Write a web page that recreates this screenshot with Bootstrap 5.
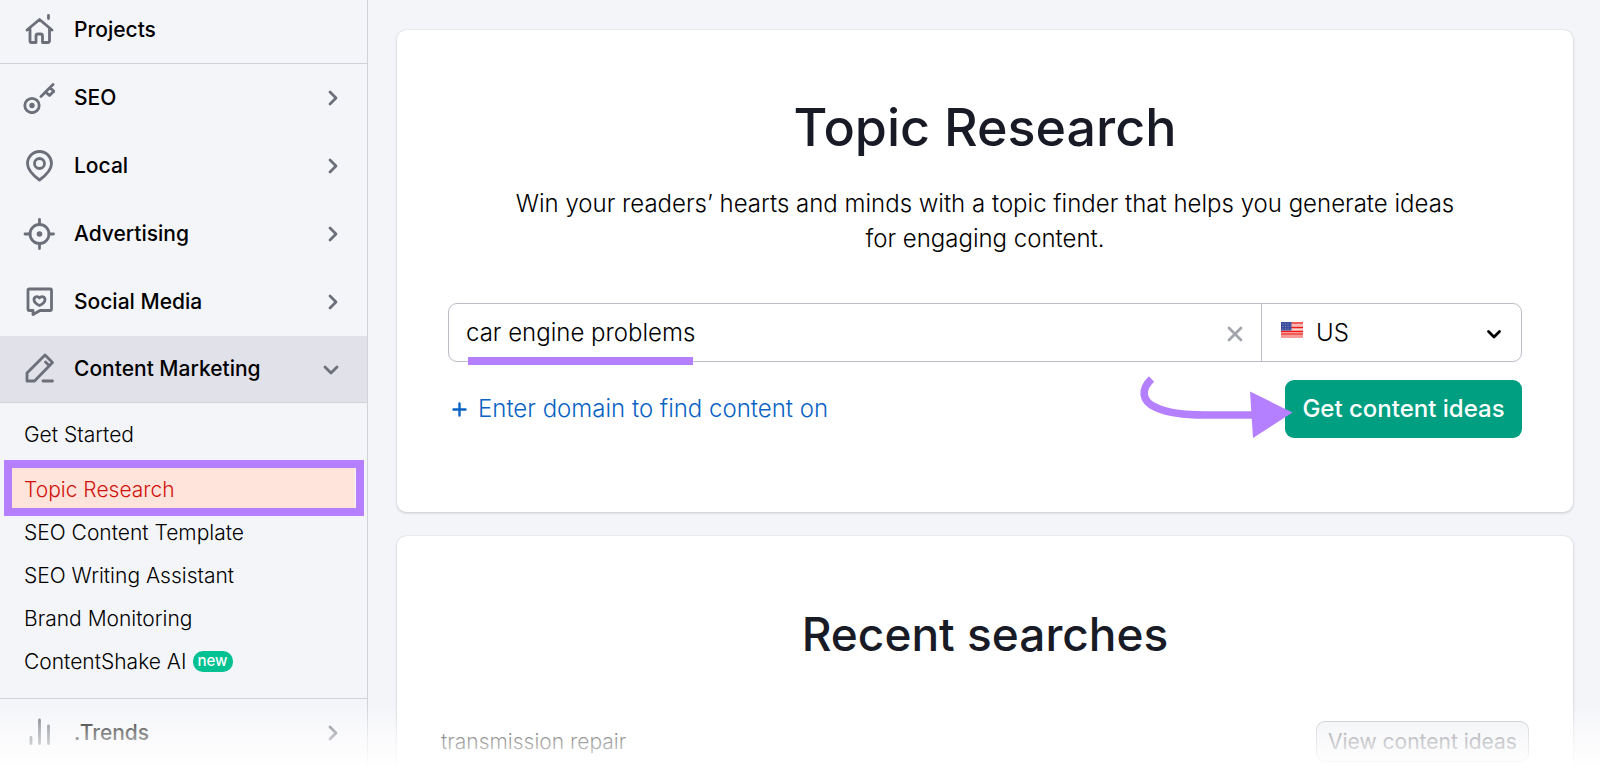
<!DOCTYPE html>
<html lang="en">
<head>
<meta charset="utf-8">
<meta name="viewport" content="width=device-width, initial-scale=1">
<title>Topic Research</title>
<link href="https://cdn.jsdelivr.net/npm/bootstrap@5.3.0/dist/css/bootstrap.min.css" rel="stylesheet">
<style>
  :root { --accent: #b580ff; --line: #d1d2d9; --ink: #181b26; --surface: #f4f5f9; }
  body { font-family: Inter, "Liberation Sans", sans-serif; background: var(--surface); color: #000; }
  .side { width: 368px; border-right: 1px solid var(--line); }
  .side-link { height: 68px; padding: 0 28px 0 23px; gap: 19px; font-size: 21px; font-weight: 500; color: #000; text-decoration: none; }
  .side-link svg { color: #6c6e79; flex: none; }
  .side-link.home { height: 64px; padding-bottom: 4px; border-bottom: 1px solid var(--line); }
  .side-link.open { height: 67px; background: #e0e1e9; border-bottom: 1px solid var(--line); }
  .stroke { fill: none; stroke: currentColor; stroke-width: 2.8; stroke-linecap: round; stroke-linejoin: round; }
  .subnav { padding: 10px 0 15px; border-bottom: 1px solid var(--line); }
  .subnav a { height: 43px; padding: 0 24px; gap: 6px; font-size: 21px; font-weight: 300; color: #000; text-decoration: none; }
  .subnav .current { margin-top: 12px; padding: 0 12px; background: #ffe4db; background-clip: content-box; color: #d1120c; }
  .subnav .current .label { padding-left: 12px; }
  .ring { inset: -8px 3px -5px 4px; border: 8px solid var(--accent); }
  .tag-new { height: 21px; padding: 0 5px; border-radius: 10px; background: #00c192; color: #fff; font-size: 15px; line-height: 19px; font-weight: 500; }
  .main { padding: 30px 27px 0 29px; gap: 24px; }
  .panel { background: #fff; border-radius: 9px; box-shadow: 0 0 1px rgba(25,27,35,.2), 0 1px 3px rgba(25,27,35,.18); }
  .finder { padding: 64px 51px 74px; }
  .finder h1 { font-size: 52px; line-height: 68px; font-weight: 500; color: var(--ink); margin: 0; }
  .lede { font-size: 24px; line-height: 35px; font-weight: 300; margin: 24px auto 0; max-width: 960px; }
  .query { margin-top: 47px; height: 59px; border: 1px solid #bdbec9; border-radius: 9px; }
  .query input { border: 0; background: none; padding: 0 17px; font-size: 24px; font-weight: 300; outline: 0; }
  .clear { border: 0; background: none; color: #a3a5ae; padding: 0 18px; }
  .country { width: 260px; border-left: 1px solid #bdbec9; }
  .country select { appearance: none; border: 0; background: none; padding: 0 54px; font-size: 24px; line-height: 30px; font-weight: 300; color: #000; outline: 0; }
  .flag { left: 19px; top: 18px; }
  .caret { right: 19px; top: 23px; }
  .mark-line { left: 19px; bottom: -4px; width: 225px; height: 8px; background: var(--accent); }
  .actions { margin-top: 18px; }
  .add { color: #0a63c4; font-size: 24px; font-weight: 300; line-height: 58px; gap: 11px; padding-left: 4px; text-decoration: none; }
  .go, .go:hover { height: 58px; width: 237px; padding: 0; border: 0; border-radius: 9px; background: #009f81; color: #fff; font-size: 24px; font-weight: 500; }
  .arrow { left: -149px; top: -4px; pointer-events: none; }
  .recent { padding: 64px 44px 40px; }
  .recent h2 { font-size: 46px; line-height: 68px; font-weight: 500; color: var(--ink); margin: 0 0 53px; }
  .recent-row { font-size: 21px; font-weight: 300; }
  .view { height: 41px; width: 213px; padding: 0; border: 1px solid #bdbec9; border-radius: 9px; background: #f0f1f4; color: #6c6e79; font-size: 21px; font-weight: 400; }
  .fade-out { height: 66px; background: linear-gradient(rgba(255,255,255,0), rgba(255,255,255,.5) 40%, rgba(255,255,255,.8) 75%, #fff 96%); pointer-events: none; }
</style>
</head>
<body>
<div class="d-flex vh-100 overflow-hidden position-relative">
  <nav class="side flex-shrink-0" aria-label="Tools">
    <a class="side-link home d-flex align-items-center" href="#">
      <svg width="32" height="32" viewBox="0 0 32 32"><path class="stroke" d="M4 16 16.500 5.500 29 16M7 14.500V27a1.500 1.500 0 0 0 1.500 1.500h4.500V22a2 2 0 0 1 2-2h2.500a2 2 0 0 1 2 2v6.500H25a1.500 1.500 0 0 0 1.500-1.500V14.500M25.500 1.500v3"/></svg>
      <span>Projects</span>
    </a>
    <a class="side-link d-flex align-items-center" href="#">
      <svg width="32" height="32" viewBox="0 0 32 32"><g class="stroke"><circle cx="9" cy="23.500" r="7.200"/><path d="M18 14.500 30 2.500M27 5.500l4 4M22.500 10l4 3.500 4-4"/></g><circle cx="9" cy="23.500" r="2.700" fill="currentColor"/></svg>
      <span class="flex-grow-1">SEO</span>
      <svg width="12" height="16" viewBox="0 0 12 16"><path class="stroke" d="m3 2 6 6-6 6"/></svg>
    </a>
    <a class="side-link d-flex align-items-center" href="#">
      <svg width="32" height="32" viewBox="0 0 32 32"><path class="stroke" d="M16.500 30C9 24.500 4.500 19.500 4.500 13.500a12 12 0 0 1 24 0c0 6-4.500 11-12 16.500Z"/><circle class="stroke" cx="16.500" cy="13.500" r="5"/></svg>
      <span class="flex-grow-1">Local</span>
      <svg width="12" height="16" viewBox="0 0 12 16"><path class="stroke" d="m3 2 6 6-6 6"/></svg>
    </a>
    <a class="side-link d-flex align-items-center" href="#">
      <svg width="32" height="32" viewBox="0 0 32 32"><g class="stroke"><circle cx="16.500" cy="16" r="9.500"/><path d="M16.500 1.500v5M16.500 25.500v5M2 16h5M26 16h4.500"/></g><circle cx="16.500" cy="16" r="2.800" fill="currentColor"/></svg>
      <span class="flex-grow-1">Advertising</span>
      <svg width="12" height="16" viewBox="0 0 12 16"><path class="stroke" d="m3 2 6 6-6 6"/></svg>
    </a>
    <a class="side-link d-flex align-items-center" href="#">
      <svg width="32" height="32" viewBox="0 0 32 32"><g class="stroke"><path d="M6 3h21.500a1 1 0 0 1 1 1v19.500a1 1 0 0 1-1 1H17l-7 4v-4H6a1 1 0 0 1-1-1V4a1 1 0 0 1 1-1Z"/><path d="M16.500 19.500c-3.500-1.500-5.500-3.500-5.500-6s3.500-4 5.500-1.500c2-2.500 5.500-1 5.500 1.500s-2 4.500-5.500 6Z"/></g></svg>
      <span class="flex-grow-1">Social Media</span>
      <svg width="12" height="16" viewBox="0 0 12 16"><path class="stroke" d="m3 2 6 6-6 6"/></svg>
    </a>
    <a class="side-link open d-flex align-items-center" href="#" aria-expanded="true">
      <svg width="32" height="32" viewBox="0 0 32 32"><path class="stroke" d="M4 28v-8L22 2l7.500 7.500L11.500 28H4ZM22.500 9l3.500 3.500M20 28h9.500"/></svg>
      <span class="flex-grow-1">Content Marketing</span>
      <svg width="16" height="12" viewBox="0 0 16 12"><path class="stroke" d="m2 4 6 6 6-6"/></svg>
    </a>
    <div class="subnav d-flex flex-column">
      <a class="d-flex align-items-center" href="#">Get Started</a>
      <a class="current d-flex align-items-center position-relative" href="#" aria-current="page"><span class="label">Topic Research</span><span class="ring position-absolute"></span></a>
      <a class="d-flex align-items-center" href="#">SEO Content Template</a>
      <a class="d-flex align-items-center" href="#">SEO Writing Assistant</a>
      <a class="d-flex align-items-center" href="#">Brand Monitoring</a>
      <a class="d-flex align-items-center" href="#">ContentShake AI <span class="tag-new">new</span></a>
    </div>
    <a class="side-link d-flex align-items-center" href="#">
      <svg width="32" height="32" viewBox="0 0 32 32"><path class="stroke" d="M8 20.500v6M16.500 3v23.500M25.500 9v17.500"/></svg>
      <span class="flex-grow-1">.Trends</span>
      <svg width="12" height="16" viewBox="0 0 12 16"><path class="stroke" d="m3 2 6 6-6 6"/></svg>
    </a>
  </nav>

  <main class="main d-flex flex-column flex-grow-1">
    <section class="panel finder flex-shrink-0">
      <h1 class="text-center">Topic Research</h1>
      <p class="lede text-center">Win your readers’ hearts and minds with a topic finder that helps you generate ideas for engaging content.</p>
      <form>
        <div class="query d-flex position-relative">
          <input class="flex-grow-1" type="text" value="car engine problems" aria-label="Topic">
          <button class="clear" type="button" aria-label="Clear"><svg width="16" height="16" viewBox="0 0 16 16"><path d="m2 2 12 12M14 2 2 14" stroke="currentColor" stroke-width="2.800" stroke-linecap="round"/></svg></button>
          <div class="country position-relative">
            <select class="w-100 h-100" aria-label="Country"><option>US</option></select>
            <svg class="flag position-absolute" width="22" height="16" viewBox="0 0 22 16"><path fill="#f59c98" d="M0 0h22v16H0z"/><path stroke="#f01a17" stroke-width="1.200" d="M0 1h22M0 5.500h22M0 9.500h22M0 12h22"/><path stroke="#fbd5d2" d="M10 3h12M10 7.500h12"/><path fill="#3c4f9c" d="M0 0h10.500v8.500H0z"/><path stroke="#7e8cc4" stroke-dasharray="1 1.500" d="M1.500 2h8M1.500 4.500h8M1.500 7h8"/></svg>
            <svg class="caret position-absolute" width="16" height="14" viewBox="0 0 16 14"><path d="m2.500 4.500 5.500 5.500 5.500-5.500" fill="none" stroke="#000" stroke-width="2.800" stroke-linecap="round" stroke-linejoin="round"/></svg>
          </div>
          <span class="mark-line position-absolute"></span>
        </div>
        <div class="actions d-flex justify-content-between">
          <a class="add d-flex align-items-center" href="#"><svg width="15" height="15" viewBox="0 0 15 15"><path d="M7.500 1.500v12M1.500 7.500h12" stroke="currentColor" stroke-width="2.400" stroke-linecap="round"/></svg>Enter domain to find content on</a>
          <div class="position-relative">
            <button class="go btn" type="submit">Get content ideas</button>
            <svg class="arrow position-absolute" width="160" height="64" viewBox="0 0 160 64"><path d="M15.500 3C5 13 5 25 20 31.500 32 37 48 39 68 39h49" fill="none" stroke="#b580ff" stroke-width="7.600"/><path fill="#b580ff" d="m114 15.500 42.500 21L117 62z"/></svg>
          </div>
        </div>
      </form>
    </section>
    <section class="panel recent flex-shrink-0">
      <h2 class="text-center">Recent searches</h2>
      <div class="recent-row d-flex justify-content-between align-items-center">
        <span>transmission repair</span>
        <button class="view btn" type="button">View content ideas</button>
      </div>
    </section>
  </main>
  <div class="fade-out position-absolute bottom-0 start-0 end-0"></div>
</div>
<script src="https://cdn.jsdelivr.net/npm/bootstrap@5.3.0/dist/js/bootstrap.bundle.min.js"></script>
</body>
</html>
